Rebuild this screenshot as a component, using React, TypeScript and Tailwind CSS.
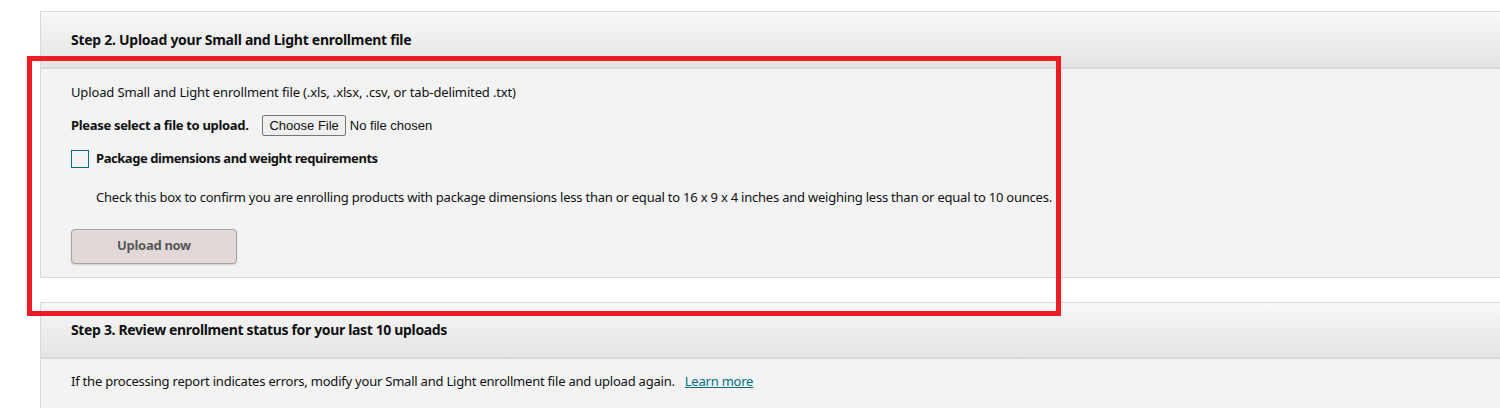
export default function App() {
  return (
    <div className="relative h-[408px] w-[1500px] overflow-hidden bg-white pt-[11px] text-[13px] tracking-[-0.22px] text-[#0f1111]" style={{ fontFamily: '"Noto Sans", "Liberation Sans", sans-serif' }}>
      {/* Step 2 */}
      <div className="ml-[40px] border border-r-0 border-[#d5d9d9]">
        <div className="flex h-[57px] items-center border-b-2 border-[#d5d9d9] bg-gradient-to-b from-[#f8f8f8] to-[#e4e4e4] pl-[30px] text-[14px] font-bold tracking-[-0.27px]">
          Step 2. Upload your Small and Light enrollment file
        </div>
        <div className="flex flex-col bg-[#f3f3f3] pb-[13px] pl-[30px] pt-[14px]">
          <div className="leading-[18px] tracking-[-0.14px]">Upload Small and Light enrollment file (.xls, .xlsx, .csv, or tab-delimited .txt)</div>
          <div className="mt-[14px] flex items-center">
            <span className="font-bold tracking-[-0.32px]">Please select a file to upload.</span>
            <label className="ml-[14px] flex items-center tracking-normal">
              <span className="rounded-[2px] border border-[#767676] bg-[#efefef] px-[6px] text-[13px] leading-[19px]" style={{ fontFamily: '"Liberation Sans", Arial, sans-serif' }}>Choose File</span>
              <span className="ml-[4px] text-[13px]" style={{ fontFamily: '"Liberation Sans", Arial, sans-serif' }}>No file chosen</span>
            </label>
          </div>
          <div className="mt-[13px] flex items-center">
            <span className="h-[18px] w-[18px] border border-[#007185]"></span>
            <span className="ml-[7px] font-bold tracking-[-0.44px]">Package dimensions and weight requirements</span>
          </div>
          <div className="mt-[19px] pl-[25px] leading-[18px]">
            Check this box to confirm you are enrolling products with package dimensions less than or equal to 16 x 9 x 4 inches and weighing less than or equal to 10 ounces.
          </div>
          <button className="mt-[23px] h-[35px] w-[166px] rounded-[4px] border border-[#a2a6a6] bg-[#e3d8d8] font-bold tracking-[-0.3px] text-[#565959] shadow-[0_1px_2px_rgba(0,0,0,0.15)]">
            Upload now
          </button>
        </div>
      </div>

      {/* Step 3 */}
      <div className="ml-[40px] mt-[24px] border border-r-0 border-[#d5d9d9]">
        <div className="flex h-[56px] items-center border-b-2 border-[#d5d9d9] bg-gradient-to-b from-[#f8f8f8] to-[#e4e4e4] pl-[30px] text-[14px] font-bold tracking-[-0.35px]">
          Step 3. Review enrollment status for your last 10 uploads
        </div>
        <div className="bg-[#f3f3f3] pb-[30px] pl-[30px] pt-[13px] leading-[18px]">
          If the processing report indicates errors, modify your Small and Light enrollment file and upload again.
          <a href="#" className="ml-[10px] text-[#007185] underline">Learn more</a>
        </div>
      </div>

      {/* red highlight */}
      <div className="absolute left-[27px] top-[56px] h-[260px] w-[1034px] border-[5px] border-[#ed1c24]"></div>
    </div>
  );
}
